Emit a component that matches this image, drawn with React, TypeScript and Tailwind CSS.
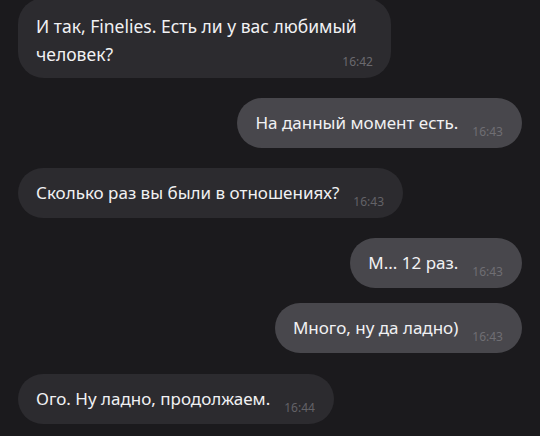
import React from "react";

interface Msg {
  text: string;
  time: string;
  mine: boolean;
}

const messages: Msg[] = [
  { text: "Сколько раз вы были в отношениях?", time: "16:43", mine: false },
  { text: "М... 12 раз.", time: "16:43", mine: true },
  { text: "Много, ну да ладно)", time: "16:43", mine: true },
  { text: "Ого. Ну ладно, продолжаем.", time: "16:44", mine: false },
];

export default function App() {
  return (
    <div
      className="w-[540px] h-[436px] overflow-hidden bg-[#1b1a1d] px-[18px] text-[#f1f1f3]"
      style={{ fontFamily: '"Noto Sans", "DejaVu Sans", sans-serif' }}
    >
      <div className="flex flex-col -mt-[2px]">
        {/* first message wraps on two lines */}
        <div className="self-start w-[373px] rounded-[26px] bg-[#2c2b2f] pl-[18px] pr-[18px] pt-[14px] pb-[10px]">
          <div className="text-[17.5px] leading-[28px]">
            И так, Finelies. Есть ли у вас любимый
          </div>
          <div className="flex items-end justify-between">
            <span className="text-[17.5px] leading-[28px]">человек?</span>
            <span className="text-[12px] leading-[14px] text-[#6a696e] -mb-[1px]">16:42</span>
          </div>
        </div>

        <Bubble text="На данный момент есть." time="16:43" mine className="mt-[20px]" />
        <Bubble {...messages[0]} className="mt-[20px]" />
        <Bubble {...messages[1]} className="mt-[20px]" />
        <Bubble {...messages[2]} className="mt-[15px]" />
        <Bubble {...messages[3]} className="mt-[21px]" />
      </div>
    </div>
  );
}

const Bubble = ({
  text,
  time,
  mine,
  className,
}: Msg & { className?: string }) => {
  return (
    <div
      className={
        (mine ? "self-end bg-[#48474c] " : "self-start bg-[#2c2b2f] ") +
        "h-[50px] rounded-[25px] pl-[18px] pr-[19px] flex items-center " +
        (className ?? "")
      }
    >
      <span className="text-[17px] leading-[24px]">{text}</span>
      <span
        className={
          "ml-[14px] self-end mb-[9px] text-[12px] leading-[14px] " +
          (mine ? "text-[#6f6e73]" : "text-[#636267]")
        }
      >
        {time}
      </span>
    </div>
  );
};
